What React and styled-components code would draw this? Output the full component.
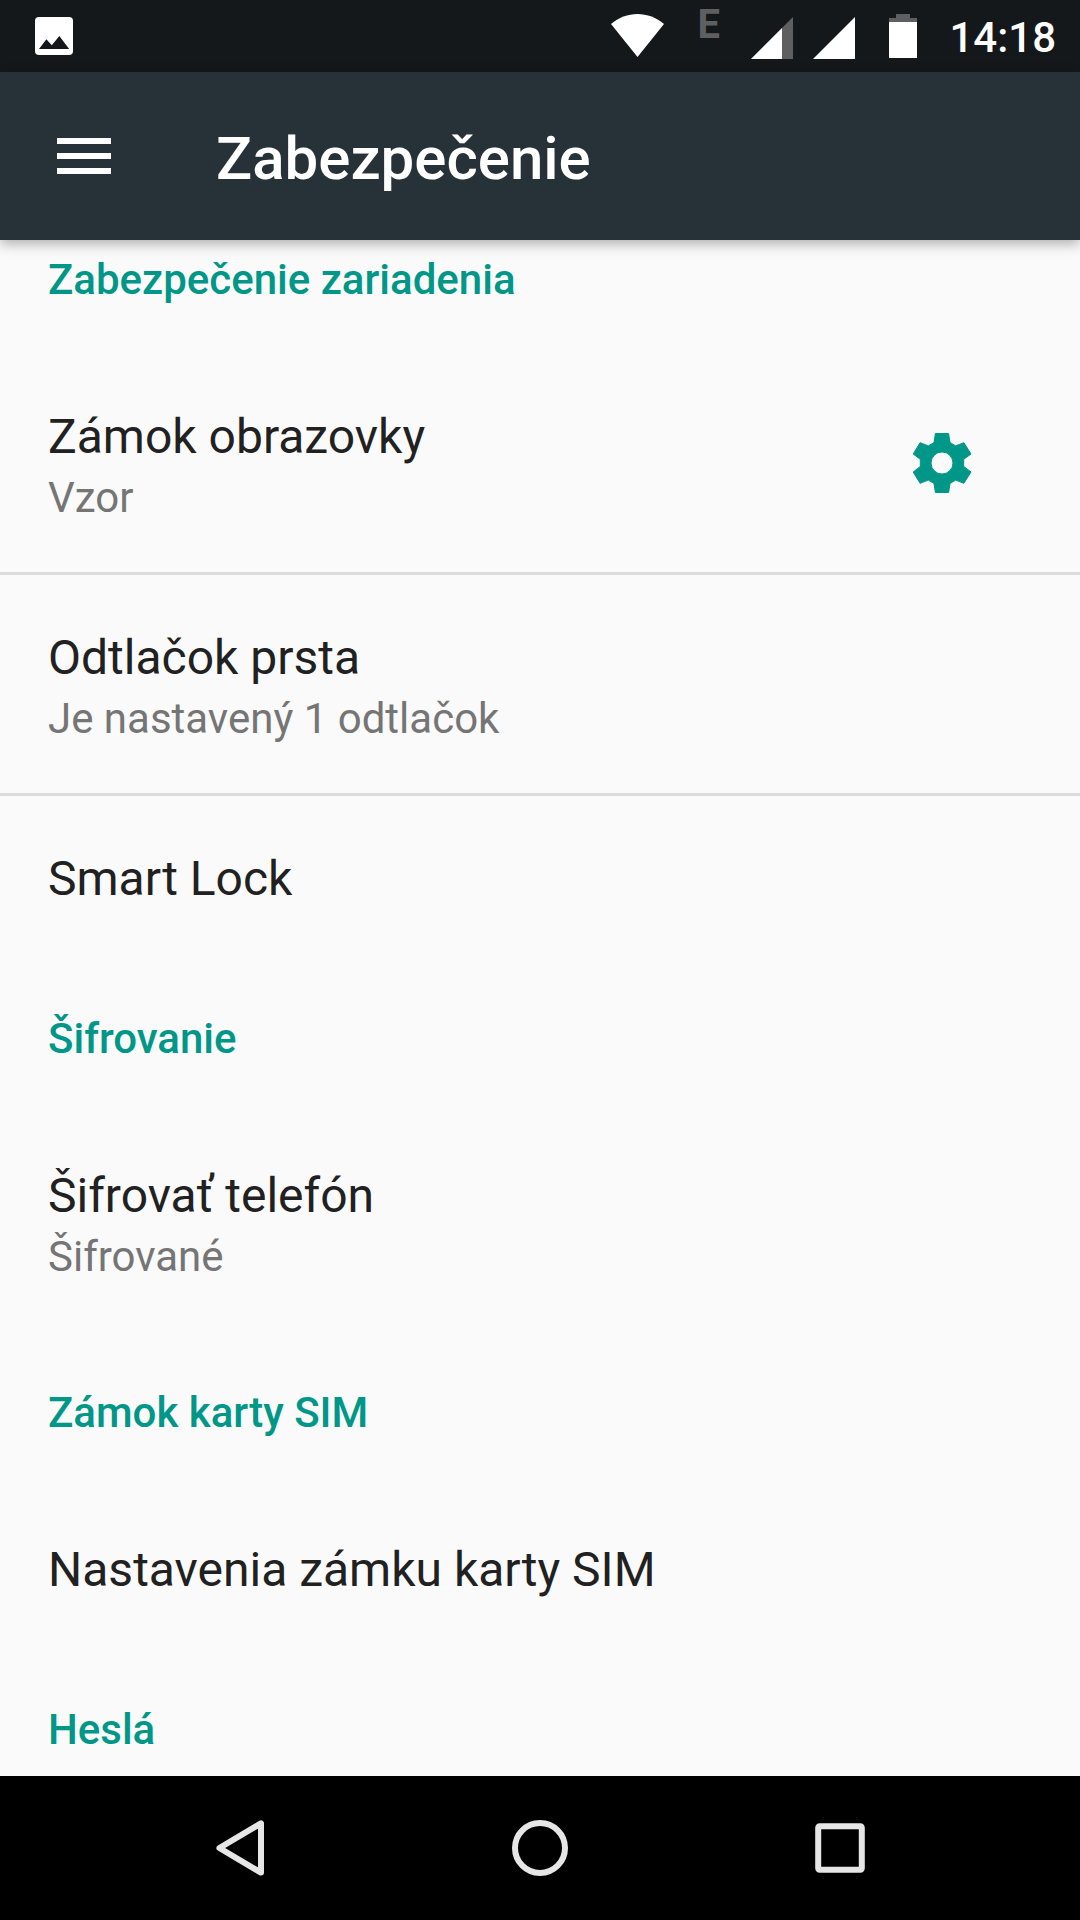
import React from "react";
import styled, { createGlobalStyle } from "styled-components";

const sections = [
  {
    title: "Zabezpečenie zariadenia",
    divided: true,
    items: [
      { title: "Zámok obrazovky", summary: "Vzor", settings: true },
      { title: "Odtlačok prsta", summary: "Je nastavený 1 odtlačok" },
      { title: "Smart Lock" },
    ],
  },
  {
    title: "Šifrovanie",
    items: [{ title: "Šifrovať telefón", summary: "Šifrované" }],
  },
  {
    title: "Zámok karty SIM",
    items: [{ title: "Nastavenia zámku karty SIM" }],
  },
  { title: "Heslá", items: [] },
];

export default function App() {
  return (
    <Screen>
      <GlobalStyle />
      <StatusBar>
        <PictureIcon />
        <StatusIcons>
          <WifiIcon />
          <NetworkType>E</NetworkType>
          <SignalIcon weak />
          <SignalIcon />
          <BatteryIcon />
          <Clock>14:18</Clock>
        </StatusIcons>
      </StatusBar>
      <Toolbar>
        <IconButton aria-label="Menu">
          <MenuIcon />
        </IconButton>
        <Title>Zabezpečenie</Title>
      </Toolbar>
      <Content>
        {sections.map((section, index) => (
          <section key={section.title}>
            <SectionTitle $first={index === 0}>{section.title}</SectionTitle>
            <List $divided={section.divided}>
              {section.items.map((item) => (
                <Row key={item.title}>
                  <RowButton>
                    <RowTitle>{item.title}</RowTitle>
                    {item.summary && <Summary>{item.summary}</Summary>}
                  </RowButton>
                  {item.settings && (
                    <GearButton aria-label="Nastavenia">
                      <GearIcon />
                    </GearButton>
                  )}
                </Row>
              ))}
            </List>
          </section>
        ))}
      </Content>
      <NavBar>
        <NavButton aria-label="Späť">
          <NavIcon>
            <path d="M57 11.4V60.6L15.4 36Z" />
          </NavIcon>
        </NavButton>
        <NavButton aria-label="Domov">
          <NavIcon>
            <circle cx="36" cy="36" r="25" />
          </NavIcon>
        </NavButton>
        <NavButton aria-label="Prehľad">
          <NavIcon>
            <rect x="14.2" y="14.2" width="43.6" height="43.6" rx="1.5" />
          </NavIcon>
        </NavButton>
      </NavBar>
    </Screen>
  );
}

const PictureIcon = () => (
  <svg width="38" height="38" viewBox="0 0 38 38">
    <rect width="38" height="38" rx="4" fill="#fff" />
    <path d="M4 32L11.4 22.2L16.8 28.2L24.3 19L34.2 32Z" fill="#14181b" />
  </svg>
);

const WifiIcon = () => (
  <svg width="66" height="44" viewBox="0 0 66 44" fill="#fff">
    <path d="M0 10C7.5 3.5 17 0 26.5 0S45.5 3.5 53 10L26.5 43Z" />
  </svg>
);

// weak - 신호 약함, 오른쪽 부분이 회색
const SignalIcon = ({ weak }) => (
  <svg width="42" height="46" viewBox="0 0 42 46">
    <path d="M42 4V46H0Z" fill={weak ? "#5e5f61" : "#fff"} />
    {weak && <path d="M31 15V46H0Z" fill="#fff" />}
  </svg>
);

const BatteryIcon = () => (
  <svg width="54" height="44" viewBox="0 0 54 44">
    <path d="M21 0H35V4H42V8H14V4H21Z" fill="#5e5f61" />
    <path d="M14 8H42V44H14Z" fill="#fff" />
  </svg>
);

const MenuIcon = () => (
  <svg width="72" height="72" viewBox="0 0 24 24" fill="#fff">
    <path d="M3 18h18v-2H3v2zm0-5h18v-2H3v2zm0-7v2h18V6H3z" />
  </svg>
);

const GearIcon = () => (
  <svg width="72" height="72" viewBox="0 0 72 72" fill="#009688">
    <path
      fillRule="evenodd"
      stroke="#009688"
      strokeLinejoin="round"
      d="M29.4 6.5H42.6L44 15.6L49.7 18.9L57.9 15.7L65 27L57.7 32.3V39.4L65 45L57.9 56.3L49.7 53.1L44 56.4L42.6 65.5H29.4L28 56.4L22.3 53.1L14.1 56.3L7.2 45L14.3 39.4V32.3L7.2 27L14.1 15.7L22.3 18.9L28 15.6ZM36 25A11 11 0 1 0 36 47A11 11 0 1 0 36 25Z"
    />
  </svg>
);

const GlobalStyle = createGlobalStyle`
  * {
    box-sizing: border-box;
  }
  body {
    margin: 0;
    background-color: #fafafa;
    font-family: Roboto, "Noto Sans", sans-serif;
  }
  button {
    padding: 0;
    border: 0;
    background: none;
    font: inherit;
    text-align: left;
    cursor: pointer;
  }
  svg {
    display: block;
    flex-shrink: 0;
  }
`;

const Screen = styled.div`
  display: flex;
  flex-direction: column;
  height: 100vh;
`;

const StatusBar = styled.div`
  display: flex;
  flex-shrink: 0;
  align-items: center;
  justify-content: space-between;
  height: 72px;
  padding: 0 24px 0 35px;
  background-color: #14181b;
  color: #fff;
`;

const StatusIcons = styled.div`
  display: flex;
  align-items: center;
  gap: 20px;
`;

const NetworkType = styled.span`
  align-self: flex-start;
  width: 34px;
  padding-top: 2px;
  font-size: 40px;
  font-weight: 700;
  line-height: 28px;
  color: #5e5f61;
`;

const Clock = styled.span`
  padding-top: 4px;
  font-size: 42px;
  font-weight: 500;
  line-height: 50px;
`;

const Toolbar = styled.header`
  position: relative;
  z-index: 1;
  display: flex;
  flex-shrink: 0;
  align-items: center;
  gap: 96px;
  height: 168px;
  padding: 0 48px;
  background-color: #263238;
  box-shadow: 0 4px 12px rgba(0, 0, 0, 0.3);
`;

const IconButton = styled.button`
  flex-shrink: 0;
`;

const Title = styled.h1`
  margin: 0;
  padding-top: 6px;
  font-size: 60px;
  font-weight: 500;
  line-height: 70px;
  color: #fff;
`;

const Content = styled.main`
  flex: 1;
  min-height: 0;
  overflow-y: auto;
  scrollbar-width: none;
`;

const SectionTitle = styled.h2`
  margin: 0;
  padding: ${(props) => (props.$first ? "15px" : "57px")} 48px 49px;
  font-size: 42px;
  font-weight: 500;
  line-height: 50px;
  color: #009688;
`;

const Row = styled.li`
  display: flex;
  align-items: center;
`;

const List = styled.ul`
  margin: 0;
  padding: 0;
  list-style: none;

  ${Row} + ${Row} {
    border-top: ${(props) => (props.$divided ? "3px solid #dcdcdc" : "none")};
  }
`;

const RowButton = styled.button`
  flex: 1;
  padding: 51px 48px 46px;
`;

const RowTitle = styled.span`
  display: block;
  font-size: 48px;
  line-height: 64px;
  color: #212121;
`;

const Summary = styled.span`
  display: block;
  font-size: 42px;
  line-height: 57px;
  color: #757575;
`;

const GearButton = styled(IconButton)`
  margin-right: 102px;
`;

const NavBar = styled.nav`
  display: flex;
  flex-shrink: 0;
  height: 144px;
  padding: 0 90px;
  background-color: #000;
`;

const NavButton = styled.button`
  display: flex;
  flex: 1;
  align-items: center;
  justify-content: center;
`;

const NavIcon = styled.svg.attrs({ viewBox: "0 0 72 72" })`
  width: 72px;
  height: 72px;
  fill: none;
  stroke: #e6e6e6;
  stroke-width: 6;
  stroke-linejoin: round;
`;
